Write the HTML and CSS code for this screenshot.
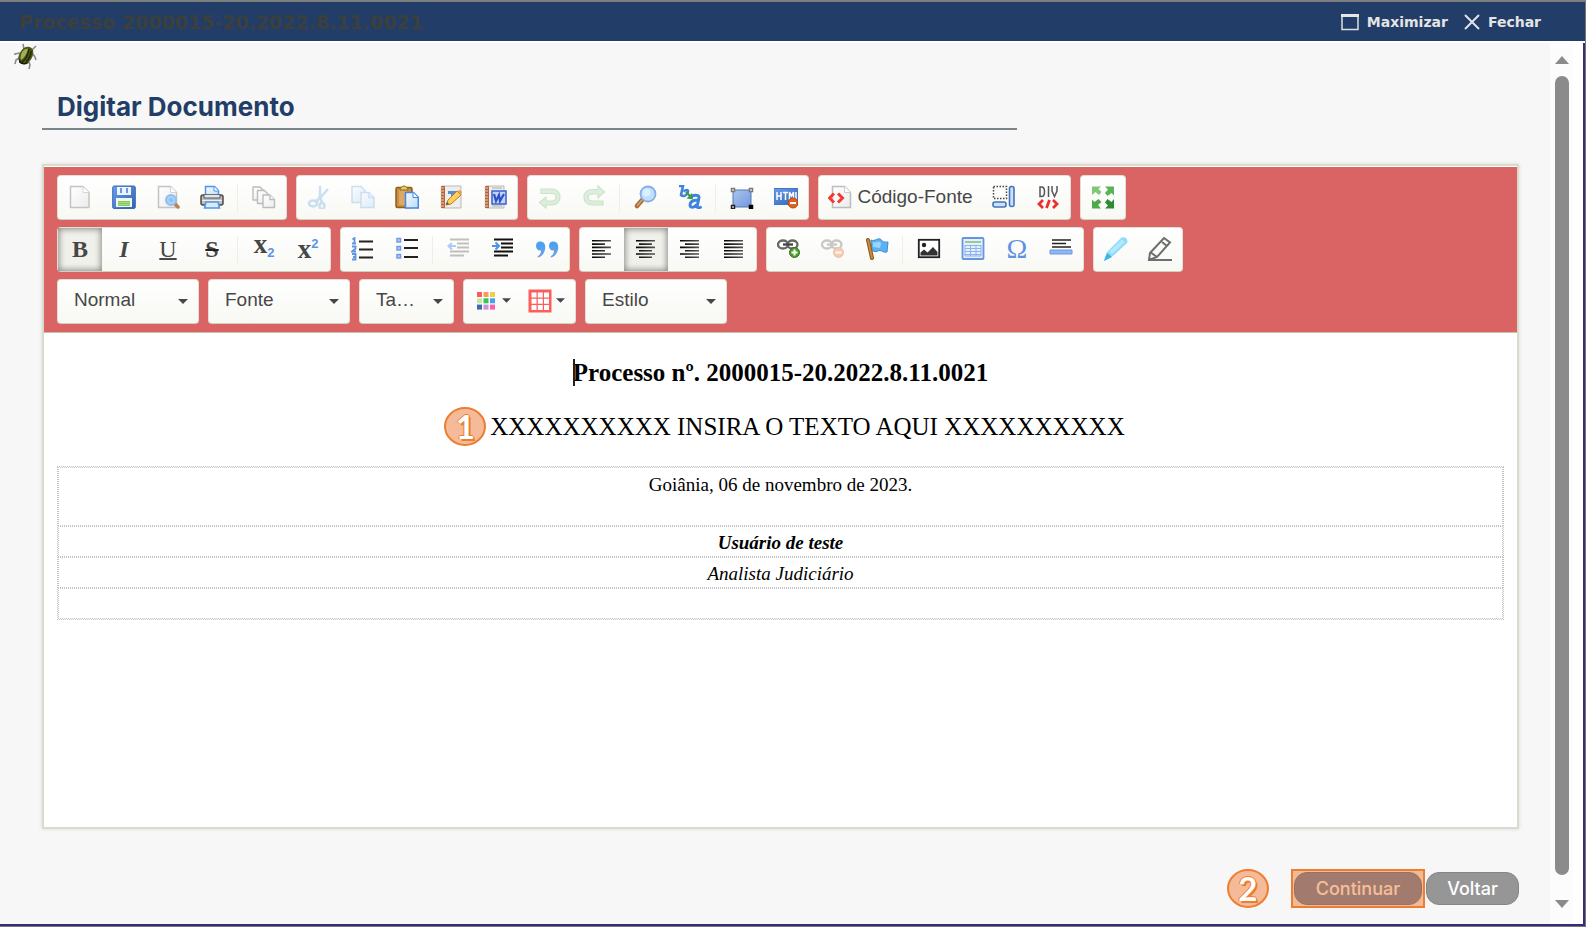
FILE: index.html
```html
<!DOCTYPE html>
<html lang="pt-BR">
<head>
<meta charset="utf-8">
<title>Digitar Documento</title>
<link rel="stylesheet" href="styles.css">
</head>
<body>
<svg class="defs" aria-hidden="true">
  <defs>
    <linearGradient id="g-page" x1="0" y1="0" x2="1" y2="1"><stop offset="0" stop-color="#fff"/><stop offset="1" stop-color="#ececec"/></linearGradient>
    <linearGradient id="g-blue" x1="0" y1="0" x2="1" y2="1"><stop offset="0" stop-color="#6b9fe8"/><stop offset="1" stop-color="#2f62b8"/></linearGradient>
    <linearGradient id="g-sheet" x1="0" y1="0" x2="1" y2="1"><stop offset="0" stop-color="#f4faff"/><stop offset="1" stop-color="#bcdcfa"/></linearGradient>
    <linearGradient id="g-ink" x1="0" y1="0" x2="1" y2="0"><stop offset="0" stop-color="#000"/><stop offset="1" stop-color="#555"/></linearGradient>
    <linearGradient id="g-box" x1="0" y1="0" x2="1" y2="1"><stop offset="0" stop-color="#a9c6f2"/><stop offset="1" stop-color="#7398dc"/></linearGradient>
    <linearGradient id="g-quote" x1="0" y1="0" x2="0" y2="1"><stop offset="0" stop-color="#3fa2f2"/><stop offset="1" stop-color="#7a9fe8"/></linearGradient>
  </defs>
</svg>

<header class="titlebar">
  <h2 class="titlebar-title">Processo 2000015-20.2022.8.11.0021</h2>
  <div class="titlebar-actions">
    <button class="window-btn" type="button">
      <svg width="18" height="18" viewBox="0 0 18 18"><path d="M1 2.5h16v14H1z" fill="none" stroke="#dcdfe4" stroke-width="1.5"/><path d="M0 1h18v3H0z" fill="#e6e6e6"/></svg>
      <span>Maximizar</span>
    </button>
    <button class="window-btn" type="button">
      <svg width="16" height="16" viewBox="0 0 16 16"><path d="M1 1l14 14M15 1L1 15" stroke="#e2e4e8" stroke-width="2" fill="none"/></svg>
      <span>Fechar</span>
    </button>
  </div>
</header>

<div class="frame">
  <main class="content">
    <div class="debug">
      <svg width="24" height="26" viewBox="0 0 24 26" role="img" aria-label="Depurar">
        <g fill="none" stroke="#8b8b8b" stroke-width="1.6"><path d="M9 1l1 5M18 7l4-4M19 11l2 3 1 3M6 10L1 11l0 1M5 15l-3 2-1 4M15 19l1 3-1 4"/></g>
        <path d="M10 5c3-2 7-2 9 2 1 4-1 9-4 12-3 3-9 3-10-1C3 14 6 8 10 5z" fill="#4b5712"/>
        <path d="M8 9c2-3 5-4 6-3-1 5-4 9-7 11-1-3 0-6 1-8z" fill="#a2ae56"/>
        <path d="M15 6c-1 6-4 11-7 13M17 8c0 4-2 8-5 11" stroke="#20270a" fill="none" stroke-width="1.4"/>
        <path d="M5 16c2 4 6 5 10 3l-2 2c-3 1-7 0-8-2z" fill="#171a0a"/>
      </svg>
    </div>

    <h1 class="page-title">Digitar Documento</h1>

    <section class="editor">
      <div class="toolbar" role="toolbar">
        <div class="toolbar-row">
          <div class="group">
            <button class="tool" type="button" aria-label="Novo"><svg viewBox="0 0 24 24"><path d="M2.500 1.500h12.500l6 6v15H2.500z" fill="url(#g-page)" stroke="#c4c4c4" stroke-linejoin="round" stroke-width="1.500"/><path d="M15 1.500v6h6" fill="#fff" stroke="#d4d4d4"/></svg></button>
            <button class="tool" type="button" aria-label="Salvar"><svg viewBox="0 0 24 24"><rect x=".7" y="1" width="22.600" height="22.500" rx="1.500" fill="url(#g-blue)" stroke="#3b69b5"/><path d="M5 2h14v8H5z" fill="#eef4fd"/><path d="M8 3h2v5H8zM14 3h2v5h-2z" fill="#6b97dc"/><path d="M4 13h16v9H4z" fill="#f3f7ee"/><path d="M6 16h12v5H6z" fill="#86c95c"/><path d="M6 17.500h12M6 19.500h12" stroke="#a5dc81"/></svg></button>
            <button class="tool" type="button" aria-label="Visualizar"><svg viewBox="0 0 24 24"><path d="M2.500 1.500h12l6 6v15h-18z" fill="url(#g-page)" stroke="#c4c4c4" stroke-width="1.500"/><path d="M14.500 1.500v6h6" fill="#fff" stroke="#d4d4d4"/><path d="M18 18l4 4" stroke="#b98250" stroke-width="3.500" stroke-linecap="round"/><circle cx="15" cy="15" r="5" fill="#a8d2f6" stroke="#8ebfee" stroke-width="2"/><circle cx="15" cy="15" r="2" fill="#8fbff0"/></svg></button>
            <button class="tool" type="button" aria-label="Imprimir"><svg viewBox="0 0 24 24"><path d="M5.500 12V1.500h9l4 4V12z" fill="url(#g-sheet)" stroke="#4f96e6" stroke-width="1.500"/><path d="M14 1.500v4.500h4.500" fill="#fff" stroke="#4f96e6"/><rect x="1" y="10" width="22" height="10" rx="2" fill="#bdbdbd" stroke="#4a4a4a" stroke-width="1.500"/><path d="M4 10v3h16v-3" fill="#e6e6e6" stroke="#555"/><path d="M2 15.500h20" stroke="#eee"/><path d="M6 17h12l1.500 6h-15z" fill="#d9ecff" stroke="#4f96e6" stroke-width="1.500"/></svg></button>
            <span class="sep"></span>
            <button class="tool" type="button" aria-label="Modelos"><svg viewBox="0 0 24 24" fill="url(#g-page)" stroke="#bcbcbc" stroke-width="1.400" stroke-linejoin="round"><path d="M1 2h7l4 4v9H1z"/><path d="M5.500 5.500h7l4 4v9h-11z"/><path d="M11 10h7l4.500 4.500v8H11z"/><path d="M18 10v4.500h4.500" fill="#fff"/></svg></button>
          </div>
          <div class="group">
            <button class="tool faded" type="button" aria-label="Recortar"><svg viewBox="0 0 24 24" fill="none" stroke="#8fbde8"><path d="M13 1v10l-3 6M21 4l-8 9-4 3M13 12l2 6" stroke-width="2.500"/><ellipse cx="6" cy="18.500" rx="4" ry="3" stroke-width="2.500"/><ellipse cx="15" cy="21" rx="2.500" ry="3" stroke-width="2.500"/></svg></button>
            <button class="tool faded" type="button" aria-label="Copiar"><svg viewBox="0 0 24 24" fill="url(#g-sheet)" stroke="#94bdea" stroke-width="1.500"><path d="M1 1.500h9l4 4v12H1z"/><path d="M10 7.500h8l5 5v10H10z"/><path d="M18 7.500v5h5"/></svg></button>
            <button class="tool" type="button" aria-label="Colar"><svg viewBox="0 0 24 24"><rect x="1" y="2.500" width="16" height="20" rx="1.500" fill="#c98f45" stroke="#915a19" stroke-width="1.500"/><path d="M4 5h8v15H4z" fill="#dba967"/><path d="M5 5c0-2 2-4 4-4s4 2 4 4z" fill="#e8c862" stroke="#8f6b1c"/><path d="M10.500 7.500h8l4.800 4.800v10.700H10.500z" fill="url(#g-sheet)" stroke="#4588dd" stroke-width="1.500"/><path d="M18 7.500v5h5" fill="#fff" stroke="#4588dd"/></svg></button>
            <button class="tool" type="button" aria-label="Colar como texto"><svg viewBox="0 0 24 24"><path d="M3 1h19v22H3z" fill="#eee" stroke="#b9b9b9"/><path d="M2 1h4v22H2z" fill="#b9653b"/><path d="M1 3h4M1 6h4M1 9h4M1 12h4M1 15h4M1 18h4M1 21h4" stroke="#e6cdbc"/><path d="M9 6h9v3h-3v5h-3V9H9z" fill="#5b8bdd"/><path d="M7 20l2-5L18 6l4 4-10 9z" fill="#ffcf5a" stroke="#b97a18"/><path d="M18 6l4 4 1-3-2-2z" fill="#ee9a6a"/><path d="M7 20l1-3 2 2z" fill="#553"/></svg></button>
            <button class="tool" type="button" aria-label="Colar do Word"><svg viewBox="0 0 24 24"><path d="M3 1h18v22H3z" fill="#eee" stroke="#b9b9b9"/><path d="M2 1h4v22H2z" fill="#b9653b"/><path d="M1 3h4M1 6h4M1 9h4M1 12h4M1 15h4M1 18h4M1 21h4" stroke="#e6cdbc"/><path d="M9 3h10M9 21h10" stroke="#aaa"/><rect x="9" y="6" width="14" height="13" fill="#c3d4f7" stroke="#3762cc" stroke-width="1.500"/><path d="M11 9l2 7 3-6 1 6 4-7" fill="none" stroke="#2c50c8" stroke-width="2.200"/></svg></button>
          </div>
          <div class="group">
            <button class="tool faded" type="button" aria-label="Desfazer"><svg viewBox="0 0 24 24"><path d="M3 4h11c5 0 8 3.500 8 8s-3 8-8 8H8v3L1.500 17.500 8 12v4h6c2.500 0 4-1.500 4-4s-1.500-3.500-4-3.500H3z" fill="#b9deb7" stroke="#93c893" stroke-width="1.200"/></svg></button>
            <button class="tool faded" type="button" aria-label="Refazer"><svg viewBox="0 0 24 24"><path d="M21 20H11c-6 0-9-3-9-8s3-7.500 9-7.500h5V1l6.500 6-6.500 6V9h-5c-3 0-5 1-5 3.500s2 3.500 5 3.500h10z" fill="#b9deb7" stroke="#93c893" stroke-width="1.200"/></svg></button>
            <span class="sep"></span>
            <button class="tool" type="button" aria-label="Localizar"><svg viewBox="0 0 24 24"><path d="M9 14l-6 7" stroke="#a56a35" stroke-width="4.500" stroke-linecap="round"/><path d="M8 15l-5 6" stroke="#e0a76b" stroke-width="1.500"/><circle cx="14" cy="9" r="7.500" fill="#bfdffb" stroke="#8aaee6" stroke-width="1.800"/><circle cx="12.500" cy="7.500" r="4" fill="#dceffd"/></svg></button>
            <button class="tool" type="button" aria-label="Substituir"><svg viewBox="0 0 24 24"><path d="M1 1h4L3 10c2 2 5 1 6.500-2s-.5-4-4-1.500" fill="none" stroke="#3f82df" stroke-width="2.600"/><path d="M12 13c2-3 9-4 9-.5L19 22c1 1 3 1 4.500-.5M20 15c-5 0-8 2-8 5 0 4 6 2 7-1" fill="none" stroke="#3f82df" stroke-width="3"/><path d="M8 7l5 5" stroke="#3f9a46" stroke-width="2.200"/><path d="M15 14.500l-1-6.500-5.500 5.500z" fill="#3f9a46"/></svg></button>
            <span class="sep"></span>
            <button class="tool" type="button" aria-label="Selecionar tudo"><svg viewBox="0 0 24 24"><path d="M3 5h18v17H3z" fill="url(#g-box)" stroke="#5476b3"/><g fill="#fff" stroke-width="1.500"><path d="M1.500 3.500h3v3h-3zM19.500 3.500h3v3h-3z" stroke="#777"/><path d="M1.500 20.500h3v3h-3z" stroke="#222"/><path d="M19.500 20.500h3v3h-3z" fill="#000" stroke="#000"/></g></svg></button>
            <button class="tool" type="button" aria-label="Remover HTML"><svg viewBox="0 0 24 24"><path d="M0 3.500h24v16H0z" fill="url(#g-blue)" stroke="#3f78ca"/><path d="M3 7v8M7 7v8M3 11h4M9 7.500h5M11.500 7v8M15.500 15V7l2 4 2-4v8M22 7v8" fill="none" stroke="#fff" stroke-width="1.500"/><circle cx="19" cy="18" r="5" fill="#e2601f" stroke="#b4480f"/><path d="M16 18h6" stroke="#fff" stroke-width="2"/></svg></button>
          </div>
          <div class="group">
            <button class="tool tool-source" type="button"><svg viewBox="0 0 24 24"><path d="M4.500 1.500h12l6 6v15h-18z" fill="url(#g-page)" stroke="#bdbdbd" stroke-width="1.500"/><path d="M16.500 1.500v6h6" fill="#fff" stroke="#ccc"/><path d="M6 8.500L1.500 13 6 17.500M10 8.500l4.500 4.500-4.500 4.500" fill="none" stroke="#f03a32" stroke-width="3"/></svg><span>Código-Fonte</span></button>
            <button class="tool" type="button" aria-label="Mostrar blocos"><svg viewBox="0 0 24 24"><path d="M1.500 1.500h13v12h-13z" fill="none" stroke="#444" stroke-width="1.500" stroke-dasharray="1.500 1.500"/><rect x="17.500" y="1.500" width="4.500" height="20" rx="2" fill="#cfe0f8" stroke="#4273bd" stroke-width="1.600"/><rect x="1" y="17" width="13" height="5" rx="2" fill="#cfe0f8" stroke="#4273bd" stroke-width="1.600"/></svg></button>
            <button class="tool" type="button" aria-label="Criar container DIV"><svg viewBox="0 0 24 24"><path d="M4 2v9.500h1.500c2 0 3-1.500 3-4.800S7.500 2 5.500 2zM12.500 1v11M16 1v5l2.500 5.500L21 6V1" fill="none" stroke="#555" stroke-width="1.500"/><path d="M7 15l-4 4 4 4M17 15l4 4-4 4M13.500 15l-3 8" fill="none" stroke="#e8322e" stroke-width="2.800"/></svg></button>
          </div>
          <div class="group">
            <button class="tool" type="button" aria-label="Maximizar editor"><svg viewBox="0 0 24 24"><path d="M1 1.500h9L7.500 4l3 3-2.500 3-3.500-3L1 10z" fill="#7fc878"/><path d="M23 1.500v9L20.500 8l-4 3-2.500-3 3-3.500-3-3z" fill="#5cb25a"/><path d="M1 23.500v-9L3.500 17l4-3 3 3-3.500 3 3 3.500z" fill="#4fa84c"/><path d="M23 23.500h-9l3-3-3-3 2.500-3.500 4 3 2.500-3z" fill="#2f8b34"/></svg></button>
          </div>
        </div>

        <div class="toolbar-row">
          <div class="group">
            <button class="tool glyph bold pressed" type="button" aria-label="Negrito" aria-pressed="true">B</button>
            <button class="tool glyph bold italic" type="button" aria-label="Itálico">I</button>
            <button class="tool glyph underline" type="button" aria-label="Sublinhado">U</button>
            <button class="tool glyph bold strike" type="button" aria-label="Tachado">S</button>
            <span class="sep"></span>
            <button class="tool glyph bold script low" type="button" aria-label="Subscrito">x<small>2</small></button>
            <button class="tool glyph bold script high" type="button" aria-label="Sobrescrito">x<small>2</small></button>
          </div>
          <div class="group">
            <button class="tool" type="button" aria-label="Lista numerada"><svg viewBox="0 0 24 24"><path d="M8 4.500h14M8 12.500h14M8 20.500h14" stroke="#222" stroke-width="1.800"/><path d="M1.500 2.500L3.500 1v6M1 6.500h4M1 9.500h3.500v2L1 14.500h4M1 17h3.500v5.500H1M2 20h2" fill="none" stroke="#5e96e2" stroke-width="1.800"/></svg></button>
            <button class="tool" type="button" aria-label="Lista com marcadores"><svg viewBox="0 0 24 24"><path d="M9 3h14M9 11h14M9 20h14" stroke="#222" stroke-width="1.800"/><g fill="#b8d3fa" stroke="#6f9de6" stroke-width="1.500"><path d="M2 1.500h3.500V5H2zM2 9.500h3.500V13H2zM2 17.500h3.500V21H2z"/></g></svg></button>
            <span class="sep"></span>
            <button class="tool faded" type="button" aria-label="Diminuir recuo"><svg viewBox="0 0 24 24"><path d="M3 2.500h19M10 6.500h12M10 10.500h12M3 14.500h19M3 18.500h14" stroke="#777" stroke-width="1.800"/><path d="M9 9H3M5 6L1.500 9 5 12.500" stroke="#4c94e8" stroke-width="2" fill="none"/></svg></button>
            <button class="tool" type="button" aria-label="Aumentar recuo"><svg viewBox="0 0 24 24"><path d="M3 2.500h19M10 6.500h12M10 10.500h12M3 14.500h19M3 18.500h14" stroke="#111" stroke-width="1.800"/><path d="M1 9h6M4.500 5.500L8 9l-3.500 3.500" stroke="#4c94e8" stroke-width="2" fill="none"/></svg></button>
            <button class="tool" type="button" aria-label="Bloco de citação"><svg viewBox="0 0 24 24" fill="url(#g-quote)"><path d="M5 4.500c4 0 6 3 5 8-1 4-3 7-7 8l-.5-1C5 18 6 16 6 13.500c-3 .5-5-1.500-5-4.500s1.500-4.500 4-4.500z"/><path d="M18 4.500c4 0 6 3 5 8-1 4-3 7-7 8l-.5-1c2.500-1.500 3.500-3.500 3.500-6-3 .5-5-1.500-5-4.500s1.500-4.500 4-4.500z"/></svg></button>
          </div>
          <div class="group">
            <button class="tool" type="button" aria-label="Alinhar à esquerda"><svg viewBox="0 0 24 24" fill="url(#g-ink)"><path d="M2 3h19v1.600H2zM2 6.300h13v1.600H2zM2 9.600h19v1.600H2zM2 12.900h13v1.600H2zM2 16.200h19v1.600H2zM2 19.500h13v1.600H2z"/></svg></button>
            <button class="tool pressed" type="button" aria-label="Centralizar" aria-pressed="true"><svg viewBox="0 0 24 24" fill="url(#g-ink)"><path d="M2 3h19v1.600H2zM5 6.300h13v1.600H5zM2 9.600h19v1.600H2zM5 12.900h13v1.600H5zM2 16.200h19v1.600H2zM5 19.500h13v1.600H5z"/></svg></button>
            <button class="tool" type="button" aria-label="Alinhar à direita"><svg viewBox="0 0 24 24" fill="url(#g-ink)"><path d="M2 3h19v1.600H2zM7 6.300h14v1.600H7zM2 9.600h19v1.600H2zM7 12.900h14v1.600H7zM2 16.200h19v1.600H2zM7 19.500h14v1.600H7z"/></svg></button>
            <button class="tool" type="button" aria-label="Justificar"><svg viewBox="0 0 24 24" fill="url(#g-ink)"><path d="M2 3h19v1.600H2zM2 6.300h19v1.600H2zM2 9.600h19v1.600H2zM2 12.900h19v1.600H2zM2 16.200h19v1.600H2zM2 19.500h19v1.600H2z"/></svg></button>
          </div>
          <div class="group">
            <button class="tool" type="button" aria-label="Inserir link"><svg viewBox="0 0 24 24"><g fill="none" stroke="#666" stroke-width="2.300"><ellipse cx="6" cy="7.500" rx="5" ry="4"/><ellipse cx="15.500" cy="7.500" rx="5" ry="4"/><path d="M6 7.500h10" stroke="#444"/></g><circle cx="17.500" cy="15.500" r="5" fill="#4c9e2e" stroke="#2f7417"/><path d="M14.500 15.500h6M17.500 12.500v6" stroke="#fff" stroke-width="2"/></svg></button>
            <button class="tool faded" type="button" aria-label="Remover link"><svg viewBox="0 0 24 24"><g fill="none" stroke="#888" stroke-width="2.300"><ellipse cx="6" cy="7.500" rx="5" ry="4"/><ellipse cx="15.500" cy="7.500" rx="5" ry="4"/><path d="M6 7.500h10"/></g><circle cx="17.500" cy="15.500" r="5" fill="#f0935c" stroke="#e07b43"/><path d="M14.500 15.500h6" stroke="#fff" stroke-width="2"/></svg></button>
            <button class="tool" type="button" aria-label="Âncora"><svg viewBox="0 0 24 24"><path d="M6 3c4 2 7-3 10-.5 1 2.500 4 3 7 2.500l-1 10c-4 1-5-2-8-1.500-2 1.500-5 1.500-7 0z" fill="#5bb2f2" stroke="#3c8bdc"/><path d="M8 5c4 1 6-2 8 1l-1 5-7-1z" fill="#9cd5fb"/><path d="M3 3l4 18" stroke="#8e5717" stroke-width="4" stroke-linecap="round"/><path d="M3 3l4 18" stroke="#c98b3b" stroke-width="2" stroke-linecap="round"/></svg></button>
            <span class="sep"></span>
            <button class="tool" type="button" aria-label="Imagem"><svg viewBox="0 0 24 24"><rect x="1.800" y="2.800" width="20.400" height="17.400" fill="#fff" stroke="#222" stroke-width="1.800"/><circle cx="7" cy="8" r="2.200" fill="#222"/><path d="M3.500 18.500v-3L7 12.500l3.500 3L16 10l4.500 5v3.500z" fill="#333"/></svg></button>
            <button class="tool" type="button" aria-label="Tabela"><svg viewBox="0 0 24 24"><rect x="1.500" y="1" width="21" height="21" rx="1" fill="#e6effd" stroke="#6594e0" stroke-width="1.800"/><path d="M4 5h16" stroke="#7ac36b" stroke-width="1.500"/><path d="M4 8.500h16M4 11.500h16M4 14.500h16M4 17.500h16M4 8v11M9.500 8v11M15 8v11M20 8v11M4 19h16" stroke="#8db3ec" fill="none"/></svg></button>
            <button class="tool glyph omega" type="button" aria-label="Caractere especial">Ω</button>
            <button class="tool" type="button" aria-label="Linha horizontal"><svg viewBox="0 0 24 24"><path d="M3 3h19M3 6.500h14M3 10h19" stroke="#222" stroke-width="1.700"/><path d="M1 13h22v4H1z" fill="#8fb6f3" stroke="#6d98df"/></svg></button>
          </div>
          <div class="group">
            <button class="tool" type="button" aria-label="Marcador"><svg viewBox="0 0 24 24"><path d="M0 24L3 15 17 1c3-2 8 1 6 5L9 19z" fill="#8edcfb"/><path d="M5 15L18 2.500l3 2.500L8 17z" fill="#b5e8fd"/><path d="M0 24l3-8 5 4z" fill="#34b5f0"/></svg></button>
            <button class="tool" type="button" aria-label="Caneta"><svg viewBox="0 0 24 24" fill="none" stroke="#6e6e6e" stroke-width="2"><path d="M1 23l1-7L16 1l6 4.500L9 20z"/><path d="M14 5l5 4M2 15l7 5M0 23h24"/></svg></button>
          </div>
        </div>

        <div class="toolbar-row">
          <div class="group combo">
            <select class="combo-select" aria-label="Formatação"><option>Normal</option></select>
            <svg class="caret" viewBox="0 0 10 5"><path d="M0 0h10L5 5z"/></svg>
          </div>
          <div class="group combo">
            <select class="combo-select" aria-label="Fonte"><option>Fonte</option></select>
            <svg class="caret" viewBox="0 0 10 5"><path d="M0 0h10L5 5z"/></svg>
          </div>
          <div class="group combo combo-small">
            <select class="combo-select" aria-label="Tamanho"><option>Ta…</option></select>
            <svg class="caret" viewBox="0 0 10 5"><path d="M0 0h10L5 5z"/></svg>
          </div>
          <div class="group group-colors">
            <button class="tool tool-color" type="button" aria-label="Cor do texto"><svg viewBox="0 0 24 24"><path d="M3 3h5v5H3z" fill="#fa5c5c"/><path d="M9.500 3h5v5h-5z" fill="#fb9a5c"/><path d="M16 3h5v5h-5z" fill="#eece4b"/><path d="M3 9.300h5v5H3z" fill="#c5e8a0"/><path d="M9.500 9.300h5v5h-5z" fill="#33c458"/><path d="M16 9.300h5v5h-5z" fill="#43a3ee"/><path d="M3 15.600h5v5H3z" fill="#4468ac"/><path d="M9.500 15.600h5v5h-5z" fill="#cc90de"/><path d="M16 15.600h5v5h-5z" fill="#fc5fae"/></svg><svg class="caret" viewBox="0 0 10 5"><path d="M0 0h10L5 5z"/></svg></button>
            <button class="tool tool-color" type="button" aria-label="Cor do plano de fundo"><svg viewBox="0 0 24 24"><path d="M.5.500h23v23H.5z" fill="#fe5d5d"/><path d="M3.500 3.500h5v5h-5zM9.800 3.500h5v5h-5zM16 3.500h5v5h-5zM3.500 9.800h5v5h-5zM9.800 9.800h5v5h-5zM16 9.800h5v5h-5zM3.500 16h5v5h-5zM9.800 16h5v5h-5zM16 16h5v5h-5z" fill="#fff"/></svg><svg class="caret" viewBox="0 0 10 5"><path d="M0 0h10L5 5z"/></svg></button>
          </div>
          <div class="group combo">
            <select class="combo-select" aria-label="Estilo"><option>Estilo</option></select>
            <svg class="caret" viewBox="0 0 10 5"><path d="M0 0h10L5 5z"/></svg>
          </div>
        </div>
      </div>

      <article class="document">
        <p class="doc-line"><strong class="doc-heading">Processo nº. 2000015-20.2022.8.11.0021</strong></p>
        <p class="doc-line doc-placeholder"><span class="marked"><span class="badge badge-inline">1</span>XXXXXXXXXX INSIRA O TEXTO AQUI XXXXXXXXXX</span></p>
        <table class="signature">
          <tbody>
            <tr class="date-row"><td>Goiânia, 06 de novembro de 2023.</td></tr>
            <tr><td><strong><em>Usuário de teste</em></strong></td></tr>
            <tr><td><em>Analista Judiciário</em></td></tr>
            <tr><td></td></tr>
          </tbody>
        </table>
      </article>
    </section>

    <footer class="actions">
      <span class="badge">2</span>
      <span class="highlight"><button class="btn btn-primary" type="button">Continuar</button></span>
      <button class="btn" type="button">Voltar</button>
    </footer>
  </main>

  <div class="scrollbar" aria-hidden="true">
    <span class="arrow arrow-up"></span>
    <span class="thumb"></span>
    <span class="arrow arrow-down"></span>
  </div>
</div>
</body>
</html>
```
FILE: styles.css
```css
* {
  box-sizing: border-box;
}

body {
  margin: 0;
  min-height: 100vh;
  display: flex;
  flex-direction: column;
  background: #f7f7f7;
  font-family: "Liberation Sans", Arial, sans-serif;
  border-bottom: 1px solid #777;
  border-right: 1px solid #777;
}

button {
  font: inherit;
  border: 0;
  padding: 0;
  background: none;
  cursor: pointer;
}

.defs {
  position: absolute;
  width: 0;
  height: 0;
}

/* Title bar */
.titlebar {
  height: 43px;
  display: flex;
  justify-content: space-between;
  align-items: center;
  padding: 0 44px 0 19px;
  background: #223d67;
  border-top: 2px solid #7f7f7f;
  border-bottom: 2px solid #fff;
}

.titlebar-title {
  margin: 0;
  font: bold 19px/24px "DejaVu Sans", Verdana, sans-serif;
  color: #3b403e;
}

.titlebar-actions {
  display: flex;
  gap: 16px;
}

.window-btn {
  display: flex;
  align-items: center;
  gap: 8px;
  font: bold 14px/20px "DejaVu Sans", Verdana, sans-serif;
  color: #e4e4e4;
}

/* Window body */
.frame {
  flex: 1;
  display: flex;
  border-right: 2px solid #3a2a7c;
  border-bottom: 2px solid #3a2a7c;
}

.content {
  flex: 1;
  display: flex;
  flex-direction: column;
  padding: 0 31px 16px 42px;
}

.debug {
  height: 25px;
  margin-left: -28px;
}

.debug svg {
  display: block;
}

.page-title {
  width: 66%;
  margin: 22px 0 34px;
  padding: 0 0 5px 15px;
  border-bottom: 2px solid #7b8589;
  font: 700 26px/33px Inter, sans-serif;
  color: #223d67;
}

/* Editor */
.editor {
  flex: 1;
  display: flex;
  flex-direction: column;
  background: #fff;
  border: 2px solid #d9dccc;
  box-shadow: 0 0 4px rgba(0, 0, 0, 0.12);
}

.toolbar {
  display: flex;
  flex-direction: column;
  gap: 7px;
  margin-top: 1px;
  padding: 8px 13px;
  background: #da6363;
  border-bottom: 1px solid #c9bdae;
}

.toolbar-row {
  display: flex;
  gap: 9px;
}

.group {
  display: flex;
  align-items: center;
  height: 45px;
  border: 1px solid #dfe0d2;
  border-bottom-color: #cfd1bf;
  border-radius: 4px;
  background: linear-gradient(#fff, #f8f9f4);
}

.tool {
  width: 44px;
  height: 43px;
  display: flex;
  align-items: center;
  justify-content: center;
  padding-bottom: 2px;
  color: #474747;
}

.tool svg {
  width: 24px;
  height: 24px;
}

.pressed {
  background: #f0f1eb;
  box-shadow: inset 0 0 6px 1px rgba(0, 0, 0, 0.45);
}

.faded svg {
  opacity: 0.45;
}

.sep {
  width: 1px;
  height: 28px;
  margin: 0 4px 0 3px;
  background: #eeefe6;
}

.tool-source {
  width: 163px;
  gap: 5px;
  font-size: 19px;
}

.glyph {
  font: 24px/24px "Liberation Serif", "Times New Roman", serif;
}

.bold {
  font-weight: bold;
}

.italic {
  font-style: italic;
}

.underline {
  text-decoration: underline;
  text-decoration-thickness: 2px;
}

.strike {
  text-decoration: line-through;
  text-decoration-color: #222;
}

.script {
  font-size: 27px;
}

.script small {
  font: bold 13px/14px "Liberation Sans", Arial, sans-serif;
  color: #5b94e6;
}

.low {
  padding-bottom: 12px;
}

.low small {
  padding-top: 18px;
}

.high small {
  padding-bottom: 10px;
}

.omega {
  font-size: 28px;
  color: #5f92e4;
}

.combo {
  position: relative;
  width: 142px;
}

.combo-small {
  width: 95px;
}

.combo-select {
  appearance: none;
  width: 100%;
  height: 43px;
  padding: 0 30px 4px 16px;
  border: 0;
  background: none;
  font: 19px/24px "Liberation Sans", Arial, sans-serif;
  color: #474747;
}

.caret {
  fill: #474747;
}

.combo .caret {
  position: absolute;
  right: 10px;
  top: 19px;
  width: 10px;
  height: 5px;
  pointer-events: none;
}

.group-colors {
  width: 113px;
  justify-content: space-evenly;
}

.tool-color {
  width: 52px;
  gap: 4px;
}

.tool-color .caret {
  width: 9px;
  height: 5px;
}

/* Document */
.document {
  flex: 1;
  padding: 25px 13px;
  font: 19px/22px "Liberation Serif", "Times New Roman", serif;
  color: #000;
}

.doc-line {
  margin: 0 0 24px;
  font-size: 25px;
  line-height: 30px;
  text-align: center;
}

.doc-heading {
  position: relative;
}

.doc-heading::before {
  content: "";
  position: absolute;
  left: 0;
  top: 0;
  bottom: 0;
  border-left: 2px solid #222;
}

.doc-placeholder {
  text-indent: 54px;
}

.marked {
  position: relative;
}

.signature {
  width: 100%;
  border: 1px dotted #c4c4c4;
  border-spacing: 0;
  text-align: center;
}

.signature td {
  height: 31px;
  padding: 5px 4px 2px;
  border: 1px dotted #c4c4c4;
}

.signature .date-row td {
  height: 59px;
  padding-top: 6px;
  vertical-align: top;
}

/* Callouts */
.badge {
  width: 42px;
  height: 39px;
  border: 2px solid #ed7d31;
  border-radius: 50%;
  background: #f5bb98;
  font: bold 33px/35px Lato, Calibri, sans-serif;
  text-align: center;
  text-indent: 0;
  color: #fff;
  text-shadow: -1px 0 #ed7d31, 1px 0 #ed7d31, 0 -1px #ed7d31, 2px 2px #ed7d31;
}

.badge-inline {
  position: absolute;
  right: 100%;
  top: -6px;
  margin-right: 4px;
}

.highlight {
  position: relative;
  display: flex;
  padding: 3px;
  margin-left: 21px;
}

.highlight::after {
  content: "";
  position: absolute;
  inset: 0;
  border: 2px solid #ed7d31;
  background: rgba(237, 125, 49, 0.5);
  pointer-events: none;
}

/* Footer actions */
.actions {
  display: flex;
  justify-content: flex-end;
  align-items: center;
  gap: 1px;
  margin-top: 40px;
}

.btn {
  height: 33px;
  padding: 0 20px;
  border: 1px solid #858585;
  border-radius: 13px;
  background: #969696;
  font: 500 18px/24px Inter, sans-serif;
  color: #fff;
}

.btn-primary {
  padding: 0 21px;
  border-color: #486494;
  background: #5777ab;
}

/* Scrollbar */
.scrollbar {
  width: 33px;
  display: flex;
  flex-direction: column;
  align-items: center;
  padding: 13px 14px 16px 5px;
  background: linear-gradient(to right, #fcfcfc 23px, #fff 23px);
}

.thumb {
  flex: 1;
  width: 14px;
  margin: 12px 0 25px;
  border-radius: 7px;
  background: #8b8b8b;
}

.arrow {
  border: 7px solid transparent;
}

.arrow-up {
  border-top: 0;
  border-bottom: 8px solid #8b8b8b;
}

.arrow-down {
  border-bottom: 0;
  border-top: 8px solid #8b8b8b;
}
```
